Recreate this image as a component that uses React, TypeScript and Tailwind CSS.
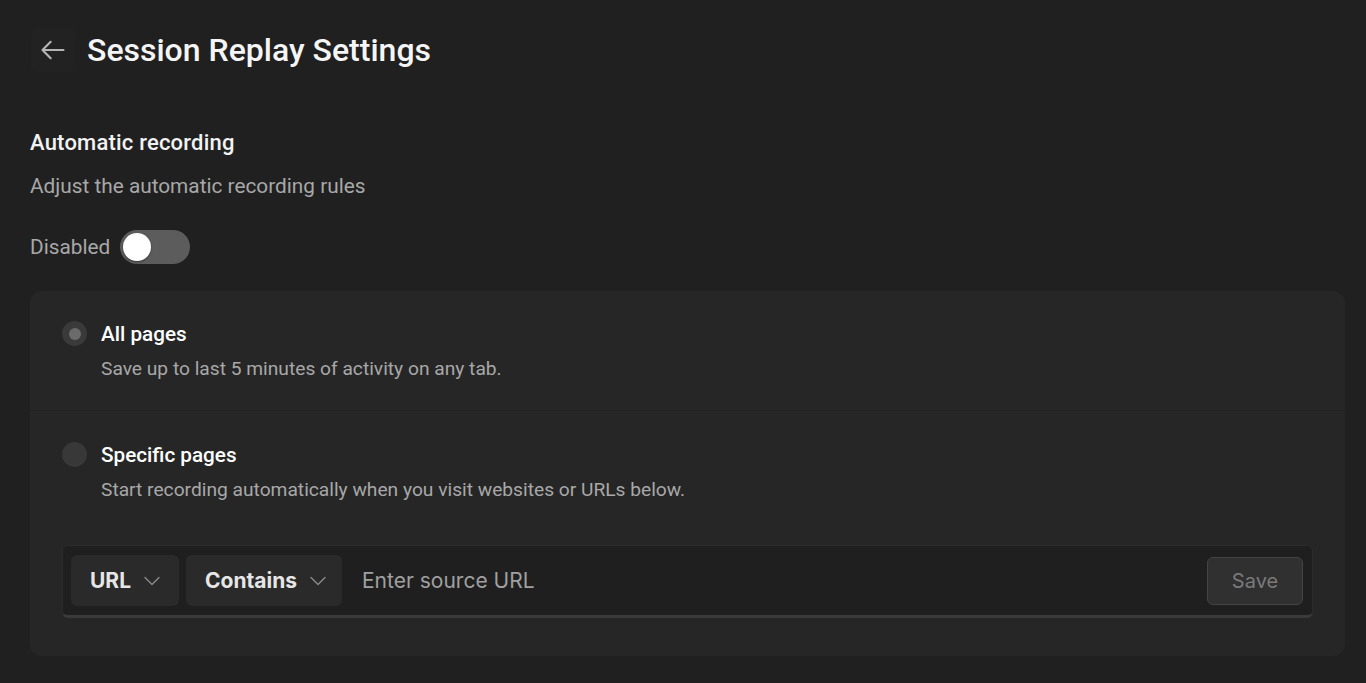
import React from "react";

function ChevronDown() {
  return (
    <svg width="18" height="18" viewBox="0 0 18 18" fill="none" className="ml-3">
      <path d="M2 5.5 L9 12.5 L16 5.5" stroke="#8a8a8a" strokeWidth="1.4" strokeLinecap="round" strokeLinejoin="round" />
    </svg>
  );
}

export default function App() {
  return (
    <div
      className="min-h-[683px] w-full bg-[#202020] text-white"
      style={{ fontFamily: "Roboto, 'Noto Sans', sans-serif" }}
    >
      <div className="pl-[30px] pr-[21px] pt-[28px]">
        <div className="flex items-center h-[44px]">
          <div className="w-[44px] h-[44px] flex items-center justify-center ml-[1px] rounded-md bg-[#222222]">
            <svg width="28" height="28" viewBox="0 0 24 24" fill="none">
              <path d="M21 12 H3.5 M10 5 L3 12 L10 19" stroke="#b5b5b5" strokeWidth="1.8" strokeLinecap="round" strokeLinejoin="round" />
            </svg>
          </div>
          <h1 className="ml-[12px] text-[32px] font-medium leading-none text-[#f5f5f5]">Session Replay Settings</h1>
        </div>

        <h2 className="mt-[57px] text-[22px] font-medium leading-[28px] text-[#f2f2f2] tracking-[0.2px]">Automatic recording</h2>
        <p className="mt-[15px] text-[20.8px] leading-[28px] text-[#a8a8a8]">Adjust the automatic recording rules</p>

        <div className="mt-[30px] flex items-center h-[34px]">
          <span className="text-[20.8px] text-[#a8a8a8] leading-[28px]">Disabled</span>
          <div className="ml-[10px] w-[70px] h-[34px] rounded-full bg-[#5c5c5c] flex items-center px-[3px]">
            <div className="w-[28px] h-[28px] rounded-full bg-white shadow-[0_1px_2px_rgba(0,0,0,0.4)]" />
          </div>
        </div>

        <div className="mt-[27px] rounded-[12px] bg-[#262626] overflow-hidden">
          <div className="h-[120px] border-b border-[#222222] px-[32px] pt-[29px] flex">
            <div className="mt-[1px] w-[25px] h-[25px] rounded-full bg-[#3a3a3a] flex items-center justify-center">
              <div className="w-[12px] h-[12px] rounded-full bg-[#6b6b6b]" />
            </div>
            <div className="ml-[14px]">
              <div className="text-[20.7px] font-medium leading-[28px] text-white">All pages</div>
              <div className="mt-[8px] text-[19.2px] leading-[26px] text-[#a8a8a8]">Save up to last 5 minutes of activity on any tab.</div>
            </div>
          </div>
          <div className="px-[32px] pt-[30px] pb-[38px]">
            <div className="flex">
              <div className="mt-[1px] w-[25px] h-[25px] rounded-full bg-[#383838]" />
              <div className="ml-[14px]">
                <div className="text-[20.7px] font-medium leading-[28px] text-white">Specific pages</div>
                <div className="mt-[8px] text-[19.2px] leading-[26px] text-[#a8a8a8]">Start recording automatically when you visit websites or URLs below.</div>
              </div>
            </div>
            <div
              className="mt-[42px] h-[73px] rounded-[6px] bg-[#1f1f1f] border border-[#2c2c2c] border-b-[3px] border-b-[#3a3a3a] flex items-center pl-[8px] pr-[9px]"
              style={{ fontFamily: "Inter, 'Noto Sans', sans-serif" }}
            >
              <div className="h-[51px] w-[108px] rounded-[6px] bg-[#2a2a2a] flex items-center pl-[19px]">
                <span className="text-[21px] font-bold text-[#e6e6e6]">URL</span>
                <ChevronDown />
              </div>
              <div className="ml-[7px] h-[51px] w-[156px] rounded-[6px] bg-[#2a2a2a] flex items-center pl-[19px]">
                <span className="text-[21px] font-bold text-[#e6e6e6]">Contains</span>
                <ChevronDown />
              </div>
              <span className="ml-[20px] flex-1 text-[21px] text-[#a0a0a0]">Enter source URL</span>
              <div className="h-[48px] w-[96px] rounded-[6px] bg-[#303030] border border-[#444444] flex items-center justify-center text-[20px] text-[#7a7a7a]">
                Save
              </div>
            </div>
          </div>
        </div>
      </div>
    </div>
  );
}
